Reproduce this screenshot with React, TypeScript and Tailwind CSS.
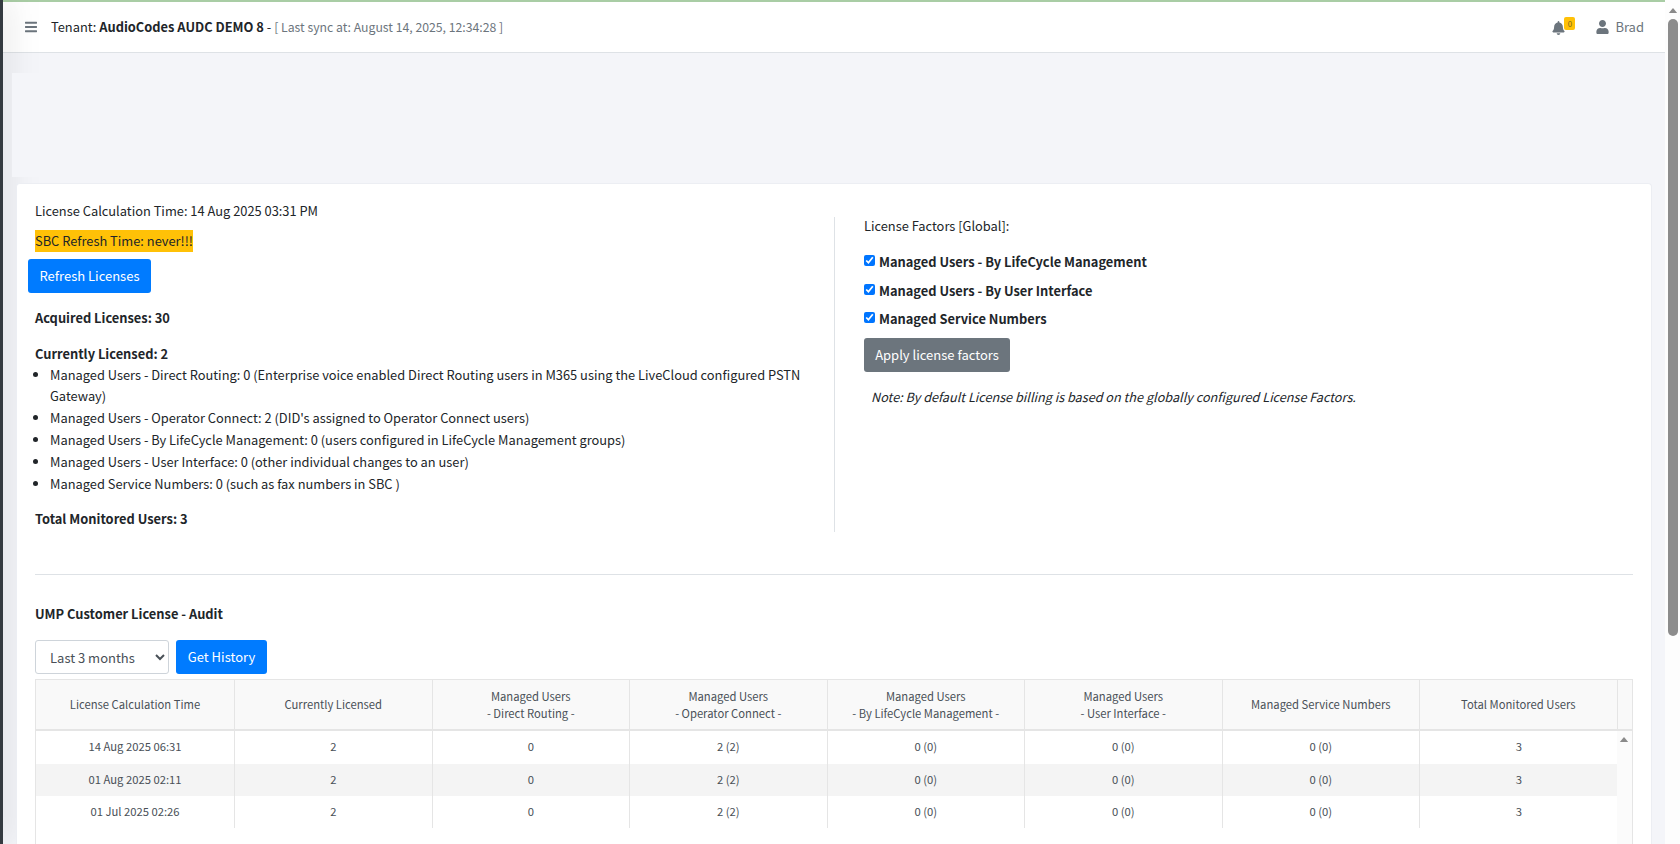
import { FaBars, FaBell, FaUser } from "react-icons/fa";

const font = { fontFamily: '"Noto Sans CJK JP", "Noto Sans", sans-serif' };

const cols = "grid grid-cols-[199px_repeat(7,197.5px)]";

const headers: [string, string?][] = [
  ["License Calculation Time"],
  ["Currently Licensed"],
  ["Managed Users", "- Direct Routing -"],
  ["Managed Users", "- Operator Connect -"],
  ["Managed Users", "- By LifeCycle Management -"],
  ["Managed Users", "- User Interface -"],
  ["Managed Service Numbers"],
  ["Total Monitored Users"],
];

const rows = [
  ["14 Aug 2025 06:31", "2", "0", "2 (2)", "0 (0)", "0 (0)", "0 (0)", "3"],
  ["01 Aug 2025 02:11", "2", "0", "2 (2)", "0 (0)", "0 (0)", "0 (0)", "3"],
  ["01 Jul 2025 02:26", "2", "0", "2 (2)", "0 (0)", "0 (0)", "0 (0)", "3"],
];

const listItems = [
  "Managed Users - Direct Routing: 0 (Enterprise voice enabled Direct Routing users in M365 using the LiveCloud configured PSTN Gateway)",
  "Managed Users - Operator Connect: 2 (DID's assigned to Operator Connect users)",
  "Managed Users - By LifeCycle Management: 0 (users configured in LifeCycle Management groups)",
  "Managed Users - User Interface: 0 (other individual changes to an user)",
  "Managed Service Numbers: 0 (such as fax numbers in SBC )",
];

const factors = [
  "Managed Users - By LifeCycle Management",
  "Managed Users - By User Interface",
  "Managed Service Numbers",
];

function Arrow({ className }: { className: string }) {
  return (
    <svg viewBox="0 0 10 6" className={className}>
      <path d="M5 0 L10 6 L0 6 Z" fill="#8a8a8a" />
    </svg>
  );
}

export default function App() {
  return (
    <div style={font} className="flex h-[844px] w-[1680px] overflow-hidden bg-[#f4f5f9] text-[12.85px] text-[#212529]">
      <div className="relative z-10 w-[3px] shrink-0 bg-[#343a40] shadow-[0_0_30px_rgba(0,0,0,0.55)]" />
      <main className="flex w-[1662px] shrink-0 flex-col">
        <div className="h-[2px] shrink-0 bg-[#a9cda5]" />
        <header className="flex h-[51px] shrink-0 items-center border-b border-[#dee2e6] bg-white pl-[21px] pr-[21px]">
          <FaBars className="h-[14px] w-[12px] translate-x-[1px] text-[#6c757d]" />
          <div className="ml-[15px] whitespace-nowrap leading-[21px]">
            Tenant: <b className="font-bold">AudioCodes AUDC DEMO 8</b> -{" "}
            <span className="text-[12.25px] text-[#6c757d]">[ Last sync at: August 14, 2025, 12:34:28 ]</span>
          </div>
          <div className="ml-auto flex items-center">
            <div className="relative mr-[32px] h-[16px] w-[13px]">
              <FaBell className="h-[14px] w-[13px] translate-x-[1px] translate-y-[2px] text-[#6c757d]" />
              <span className="absolute -right-[11px] -top-[2px] flex h-[13px] w-[11px] items-center justify-center rounded-[2px] bg-[#ffc107] text-[8px] leading-none text-[#7a6a20]">
                0
              </span>
            </div>
            <FaUser className="h-[14px] w-[13px] text-[#6c757d]" />
            <span className="ml-[6px] text-[13px] text-[#6c757d]">Brad</span>
          </div>
        </header>

        <div className="relative z-20 ml-[9px] mt-[20px] h-[104px] shrink-0 bg-[#f4f5f9]" />

        <section className="relative z-20 ml-[13px] mr-[13px] mt-[6px] h-[662px] shrink-0 rounded-t-[4px] border border-b-0 border-[#eceef3] bg-white pl-[18px] pr-[18px] pt-[16px]">
          <div className="flex">
            <div className="w-[799px] shrink-0 leading-[21px]">
              <div className="h-[21px] pr-[30px]">License Calculation Time: 14 Aug 2025 03:31 PM</div>
              <div className="mt-[9px]">
                <span className="inline-block h-[22px] bg-[#ffc107]">SBC Refresh Time: never!!!</span>
              </div>
              <button className="-ml-[7px] mt-[7px] flex h-[34px] w-[123px] items-center justify-center rounded-[3px] bg-[#007bff] pb-[1px] text-[13px] text-white">
                Refresh Licenses
              </button>
              <div className="mt-[14px] font-bold">Acquired Licenses: 30</div>
              <div className="mt-[15px] font-bold">Currently Licensed: 2</div>
              <ul className="ml-[15px] list-disc pr-[15px]">
                {listItems.map((t) => (
                  <li key={t} className="mb-[1px] leading-[21px]">
                    {t}
                  </li>
                ))}
              </ul>
              <div className="mt-[14px] font-bold">Total Monitored Users: 3</div>
            </div>
            <div className="mt-[17px] h-[315px] border-l border-[#dee2e6] pl-[29px] leading-[21px]">
              <div className="-translate-y-[2px]">License Factors [Global]:</div>
              <div className="mt-[13px] flex flex-col gap-[7.5px]">
                {factors.map((f) => (
                  <label key={f} className="flex items-center font-bold">
                    <input type="checkbox" defaultChecked className="mr-[4px] h-[11px] w-[11px] -translate-y-[1px] accent-[#0075ff]" />
                    {f}
                  </label>
                ))}
              </div>
              <button className="mt-[9px] flex h-[34px] w-[146px] items-center justify-center rounded-[3px] bg-[#6c757d] pb-[1px] text-[13px] text-white">
                Apply license factors
              </button>
              <div className="ml-[7px] mt-[14px] text-[12.68px] italic">
                Note: By default License billing is based on the globally configured License Factors.
              </div>
            </div>
          </div>

          <hr className="mt-[42px] border-[#dee2e6]" />

          <div className="mt-[28px] font-bold leading-[21px]">UMP Customer License - Audit</div>
          <div className="mt-[16px] flex gap-[7px]">
            <select className="h-[34px] w-[134px] rounded-[3px] border border-[#ced4da] bg-white pl-[10px] text-[13px] text-[#495057]">
              <option>Last 3 months</option>
            </select>
            <button className="flex h-[34px] w-[91px] items-center justify-center rounded-[3px] bg-[#007bff] pb-[1px] text-[13px] text-white">
              Get History
            </button>
          </div>

          <div className="mt-[5px] h-[200px] w-[1598px] border-x border-t border-[#e5e5e5] text-[11.25px] leading-[17px] text-[#495057]">
            <div className="flex h-[51px] border-b-2 border-[#e5e5e5] bg-[#f9f9f9]">
              <div className={cols}>
                {headers.map(([a, b]) => (
                  <div key={a + b} className="flex flex-col items-center justify-center border-r border-[#e5e5e5] text-center">
                    <div>{a}</div>
                    {b && <div>{b}</div>}
                  </div>
                ))}
              </div>
            </div>
            <div className="flex">
              <div className="w-[1581px]">
                {rows.map((r, i) => (
                  <div key={r[0]} className={`${cols} ${i === 0 ? "h-[33px]" : "h-[32px]"} ${i === 1 ? "bg-[#f4f4f4]" : "bg-white"}`}>
                    {r.map((c, j) => (
                      <div key={j} className={`flex items-center justify-center pb-[2px] ${j < 7 ? "border-r border-[#e5e5e5]" : ""}`}>
                        {c}
                      </div>
                    ))}
                  </div>
                ))}
              </div>
              <div className="h-[140px] w-[15px] bg-[#fbfbfb] pl-[2px] pt-[6px]">
                <Arrow className="h-[5px] w-[10px]" />
              </div>
            </div>
          </div>
        </section>
      </main>
      <div className="flex w-[15px] shrink-0 flex-col items-center bg-[#fdfdfd] pt-[8px]">
        <Arrow className="h-[5px] w-[10px]" />
        <div className="mt-[6px] h-[617px] w-[10px] shrink-0 rounded-[5px] bg-[#8c8c8c]" />
      </div>
    </div>
  );
}
